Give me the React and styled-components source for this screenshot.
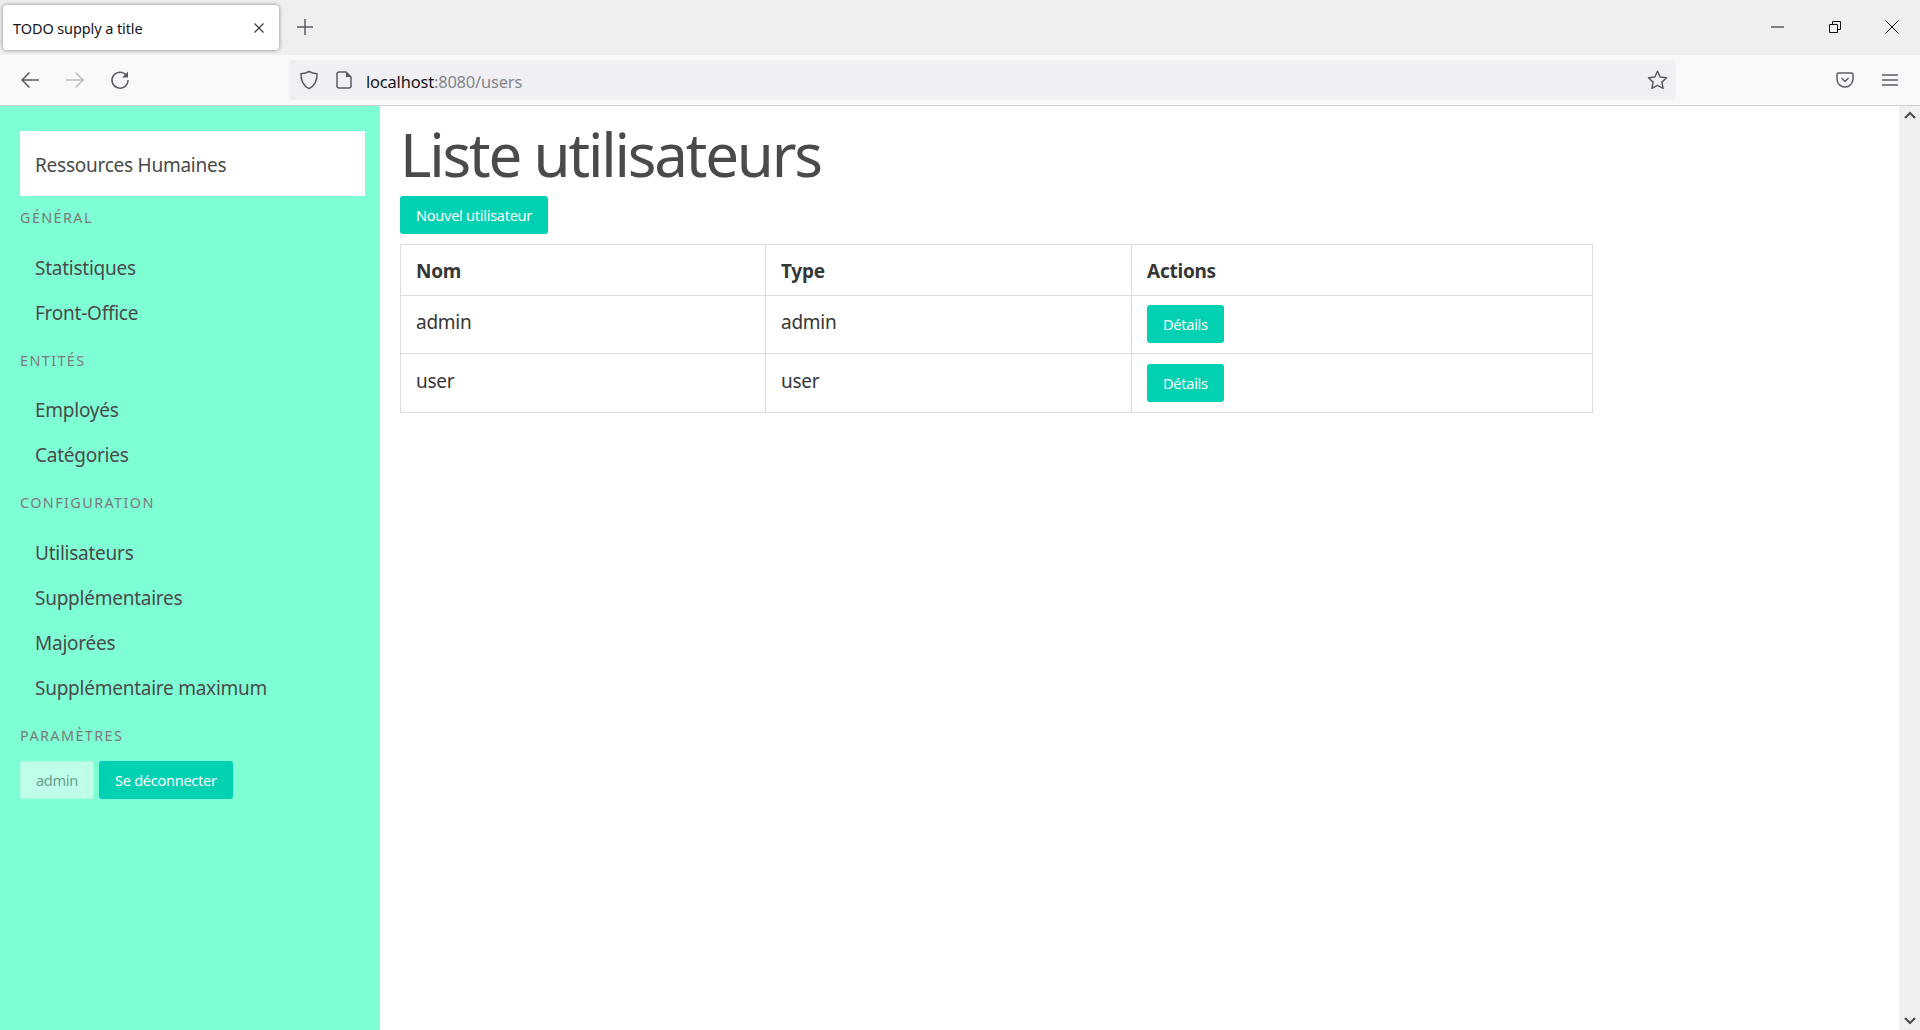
import React from "react"
import styled, { createGlobalStyle } from "styled-components"

const Global = createGlobalStyle`
  html, body {
    margin: 0;
    height: 100%;
    overflow: hidden;
    background: #fff;
    font-family: "Noto Sans", "Open Sans", sans-serif;
  }
  * { box-sizing: border-box; }
`

const Page = styled.div`
  width: 1920px;
  height: 1030px;
  display: flex;
  flex-direction: column;
`

const TabBar = styled.div`
  height: 55px;
  background: #efefef;
  display: flex;
  align-items: flex-start;
  padding: 5px 0 0 3px;
`

const Tab = styled.div`
  width: 276px;
  height: 45px;
  padding: 1px 14px 0 10px;
  background: #fff;
  border-radius: 4px;
  box-shadow: 0 0 4px rgba(0, 0, 0, 0.45);
  display: flex;
  align-items: center;
  justify-content: space-between;
  font-size: 14.5px;
  letter-spacing: -0.1px;
  color: #15141a;
`

const NewTab = styled.div`
  margin: 10px 0 0 14px;
  width: 24px;
  height: 24px;
  display: flex;
  align-items: center;
  justify-content: center;
`

const WindowButtons = styled.div`
  margin-left: auto;
  display: flex;
  align-items: center;
  height: 44px;
`

const WindowButton = styled.div`
  width: 57px;
  height: 44px;
  display: flex;
  align-items: center;
  justify-content: center;
`

const NavBar = styled.div`
  height: 51px;
  background: #f9f9fb;
  border-bottom: 1px solid #ccc;
  display: flex;
  align-items: center;
  padding: 0 0 1px 0;
`

const NavIcon = styled.div`
  width: 45px;
  height: 40px;
  display: flex;
  align-items: center;
  justify-content: center;
`

const NavLeft = styled.div`
  display: flex;
  width: 289px;
  padding-left: 7px;
`

const UrlBar = styled.div`
  width: 1387px;
  height: 40px;
  background: #f0f0f4;
  border-radius: 4px;
  display: flex;
  align-items: center;
  padding: 0 8px 0 2px;
  font-size: 16.5px;
  letter-spacing: -0.2px;
  color: #15141a;
`

const UrlIcon = styled.div`
  width: 35px;
  display: flex;
  justify-content: center;
`

const UrlText = styled.div`
  margin: 3px 0 0 5px;
  flex: 1;
`

const UrlMuted = styled.span`
  color: #85848c;
`

const NavRight = styled.div`
  margin-left: auto;
  display: flex;
  padding-right: 8px;
`

const Body = styled.div`
  flex: 1;
  display: flex;
  min-height: 0;
`

const Sidebar = styled.aside`
  width: 380px;
  background: #7fffd4;
  padding: 25px 15px 0 20px;
  flex-shrink: 0;
`

const Logo = styled.div`
  height: 65px;
  background: #fff;
  display: flex;
  align-items: center;
  padding: 2px 0 0 15px;
  font-size: 19px;
  letter-spacing: -0.25px;
  color: #4a4a4a;
`

const MenuLabel = styled.p`
  margin: ${p => p.$top}px 0 0;
  height: 24px;
  line-height: 24px;
  font-size: 14.4px;
  letter-spacing: 1.4px;
  text-transform: uppercase;
  color: #7a7a7a;
`

const MenuList = styled.ul`
  list-style: none;
  margin: ${p => p.$top}px 0 0;
  padding: 0;
`

const MenuItem = styled.li`
  height: 45px;
  line-height: 49px;
  padding-left: 15px;
  font-size: 19px;
  letter-spacing: -0.25px;
  color: #4a4a4a;
`

const UserRow = styled.div`
  display: flex;
  gap: 5px;
  margin-top: 13px;
`

const Button = styled.div`
  height: 38px;
  padding: 0 ${p => p.$pad || 16}px;
  display: inline-flex;
  align-items: center;
  border-radius: 3px;
  background: #00d1b2;
  color: #fff;
  font-size: 14.6px;
  letter-spacing: -0.3px;
`

const DisabledButton = styled(Button)`
  background: #bfffe9;
  border: 1px solid #b2f5de;
  border-radius: 2px;
  color: #6a9c8c;
  width: 74px;
  justify-content: center;
  padding: 0;
`

const Main = styled.main`
  flex: 1;
  padding: 0 0 0 20px;
  min-width: 0;
`

const Title = styled.h1`
  margin: 0;
  height: 90px;
  line-height: 96px;
  font-size: 60px;
  font-weight: 400;
  letter-spacing: -2.2px;
  color: #4a4a4a;
`

const Table = styled.table`
  margin-top: 10px;
  width: 1193px;
  border-collapse: collapse;
  table-layout: fixed;
  font-size: 19px;
  letter-spacing: -0.25px;
  color: #363636;
`

const HeadCell = styled.th`
  height: 51px;
  border: 1px solid #dbdbdb;
  padding: 2px 15px 0;
  text-align: left;
  font-weight: 700;
  width: ${p => p.$w}px;
`

const Cell = styled.td`
  border: 1px solid #dbdbdb;
  height: ${p => p.$h}px;
  padding: 0 15px 5px;
`

const ButtonCell = styled(Cell)`
  padding: 0 15px 1px;
`

const Scrollbar = styled.div`
  width: 21px;
  flex-shrink: 0;
  background: #f0f0f0;
  display: flex;
  flex-direction: column;
  justify-content: space-between;
  align-items: center;
  padding: 5px 0;
`

const stroke = { fill: "none", stroke: "#5b5b66", strokeWidth: 1.5 }

const users = [
  { name: "admin", type: "admin", h: 58 },
  { name: "user", type: "user", h: 59 },
]

const menus = [
  { label: "Général", top: 10, listTop: 14, items: ["Statistiques", "Front-Office"] },
  { label: "Entités", top: 15, listTop: 13, items: ["Employés", "Catégories"] },
  { label: "Configuration", top: 15, listTop: 14, items: ["Utilisateurs", "Supplémentaires", "Majorées", "Supplémentaire maximum"] },
]

const App = () => (
  <Page>
    <Global />
    <TabBar>
      <Tab>
        TODO supply a title
        <svg width="12" height="12" viewBox="0 0 12 12" stroke="#3a3944" strokeWidth="1.2">
          <path d="M1.5 1.5l9 9M10.5 1.5l-9 9" />
        </svg>
      </Tab>
      <NewTab>
        <svg width="16" height="16" viewBox="0 0 16 16" stroke="#5b5b66" strokeWidth="1.5">
          <path d="M8 0v16M0 8h16" />
        </svg>
      </NewTab>
      <WindowButtons>
        <WindowButton>
          <svg width="13" height="2" viewBox="0 0 13 2" stroke="#111" strokeWidth="1"><path d="M0 1h13" /></svg>
        </WindowButton>
        <WindowButton>
          <svg width="12" height="12" viewBox="0 0 12 12" fill="none" stroke="#111" strokeWidth="1">
            <path d="M.5 3.5h8v8h-8zM3.5 3.5v-3h8v8h-3" />
          </svg>
        </WindowButton>
        <WindowButton>
          <svg width="14" height="14" viewBox="0 0 14 14" stroke="#111" strokeWidth="1"><path d="M.5.5l13 13M13.5.5l-13 13" /></svg>
        </WindowButton>
      </WindowButtons>
    </TabBar>
    <NavBar>
      <NavLeft>
        <NavIcon>
          <svg width="20" height="20" viewBox="0 0 20 20" fill="none" stroke="#5b5b66" strokeWidth="1.5">
            <path d="M19 10H2M9.5 2.5L2 10l7.5 7.5" />
          </svg>
        </NavIcon>
        <NavIcon>
          <svg width="20" height="20" viewBox="0 0 20 20" fill="none" stroke="#bdbdc2" strokeWidth="1.5">
            <path d="M1 10h17M10.5 2.5L18 10l-7.500 7.500" />
          </svg>
        </NavIcon>
        <NavIcon>
          <svg width="20" height="20" viewBox="0 0 20 20" fill="none" {...stroke}>
            <path d="M16.5 5.5A8 8 0 1 0 18 10" />
            <path d="M18 1.5v6h-6z" fill="#5b5b66" stroke="none" />
          </svg>
        </NavIcon>
      </NavLeft>
      <UrlBar>
        <UrlIcon>
          <svg width="20" height="20" viewBox="0 0 20 20" {...stroke}>
            <path d="M10 1.5c2.5 1.5 5 2 8 2.200.3 6.500-1.500 11.500-8 15-6.500-3.500-8.300-8.500-8-15 3-.2 5.500-.7 8-2.200z" />
          </svg>
        </UrlIcon>
        <UrlIcon>
          <svg width="16" height="18" viewBox="0 0 16 18" {...stroke}>
            <path d="M3 1h7l5 5v9a2 2 0 0 1-2 2H3a2 2 0 0 1-2-2V3a2 2 0 0 1 2-2z" />
            <path d="M10 1v5h5z" fill="#5b5b66" stroke="none" />
          </svg>
        </UrlIcon>
        <UrlText>localhost<UrlMuted>:8080/users</UrlMuted></UrlText>
        <svg width="21" height="20" viewBox="0 0 21 20" {...stroke} strokeLinejoin="round">
          <path d="M10.500 1.200l2.700 5.800 6.300.8-4.600 4.300 1.200 6.300-5.600-3.100-5.600 3.100 1.200-6.300L1.500 7.800l6.300-.8z" />
        </svg>
      </UrlBar>
      <NavRight>
        <NavIcon>
          <svg width="18" height="16" viewBox="0 0 18 16" {...stroke}>
            <path d="M2.500 1h13A1.500 1.500 0 0 1 17 2.500V7a8 8 0 0 1-16 0V2.500A1.500 1.500 0 0 1 2.500 1z" />
            <path d="M5.500 6L9 9.500 12.500 6" />
          </svg>
        </NavIcon>
        <NavIcon>
          <svg width="16" height="14" viewBox="0 0 16 14" {...stroke}>
            <path d="M0 2h16M0 7h16M0 12h16" />
          </svg>
        </NavIcon>
      </NavRight>
    </NavBar>
    <Body>
      <Sidebar>
        <Logo>Ressources Humaines</Logo>
        {menus.map(menu => (
          <React.Fragment key={menu.label}>
            <MenuLabel $top={menu.top}>{menu.label}</MenuLabel>
            <MenuList $top={menu.listTop}>
              {menu.items.map(item => <MenuItem key={item}>{item}</MenuItem>)}
            </MenuList>
          </React.Fragment>
        ))}
        <MenuLabel $top={15}>Paramètres</MenuLabel>
        <UserRow>
          <DisabledButton>admin</DisabledButton>
          <Button>Se déconnecter</Button>
        </UserRow>
      </Sidebar>
      <Main>
        <Title>Liste utilisateurs</Title>
        <Button>Nouvel utilisateur</Button>
        <Table>
          <thead>
            <tr>
              <HeadCell $w={365}>Nom</HeadCell>
              <HeadCell $w={366}>Type</HeadCell>
              <HeadCell>Actions</HeadCell>
            </tr>
          </thead>
          <tbody>
            {users.map(u => (
              <tr key={u.name}>
                <Cell $h={u.h}>{u.name}</Cell>
                <Cell $h={u.h}>{u.type}</Cell>
                <ButtonCell $h={u.h}><Button $pad={16}>Détails</Button></ButtonCell>
              </tr>
            ))}
          </tbody>
        </Table>
      </Main>
      <Scrollbar>
        <svg width="12" height="8" viewBox="0 0 12 8" fill="none" stroke="#505050" strokeWidth="2.200"><path d="M1 7l5-5 5 5" /></svg>
        <svg width="12" height="8" viewBox="0 0 12 8" fill="none" stroke="#505050" strokeWidth="2.200"><path d="M1 1l5 5 5-5" /></svg>
      </Scrollbar>
    </Body>
  </Page>
)

export default App
